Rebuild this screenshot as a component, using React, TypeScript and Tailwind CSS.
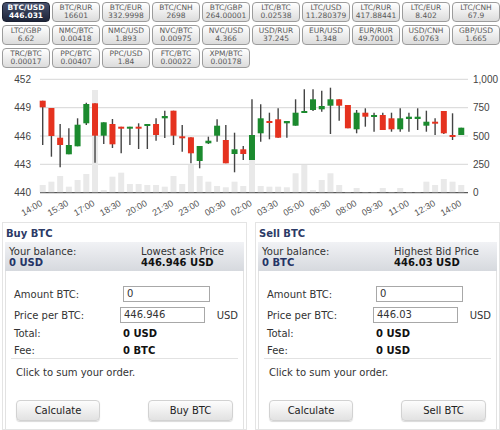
import React from 'react'

type Ticker = { pair: string; price: string }

const tickers: Ticker[] = [
  { pair: 'BTC/USD', price: '446.031' },
  { pair: 'BTC/RUR', price: '16601' },
  { pair: 'BTC/EUR', price: '332.9998' },
  { pair: 'BTC/CNH', price: '2698' },
  { pair: 'BTC/GBP', price: '264.00001' },
  { pair: 'LTC/BTC', price: '0.02538' },
  { pair: 'LTC/USD', price: '11.280379' },
  { pair: 'LTC/RUR', price: '417.88441' },
  { pair: 'LTC/EUR', price: '8.402' },
  { pair: 'LTC/CNH', price: '67.9' },
  { pair: 'LTC/GBP', price: '6.62' },
  { pair: 'NMC/BTC', price: '0.00418' },
  { pair: 'NMC/USD', price: '1.893' },
  { pair: 'NVC/BTC', price: '0.00975' },
  { pair: 'NVC/USD', price: '4.366' },
  { pair: 'USD/RUR', price: '37.245' },
  { pair: 'EUR/USD', price: '1.348' },
  { pair: 'EUR/RUR', price: '49.70001' },
  { pair: 'USD/CNH', price: '6.0763' },
  { pair: 'GBP/USD', price: '1.665' },
  { pair: 'TRC/BTC', price: '0.00017' },
  { pair: 'PPC/BTC', price: '0.00407' },
  { pair: 'PPC/USD', price: '1.84' },
  { pair: 'FTC/BTC', price: '0.00022' },
  { pair: 'XPM/BTC', price: '0.00178' },
]

// [wickTop, wickBottom, bodyTop, bodyBottom, rising, volumeTop] in page pixels
const candles: [number, number, number, number, number, number][] = [
  [100.7, 145, 100.7, 107.3, 0, 185],
  [108, 156.7, 108, 136, 0, 181.7],
  [124, 167.3, 137.7, 145, 0, 176],
  [128.3, 154.3, 145, 154.3, 1, 186.7],
  [118.3, 146.3, 124.7, 146.3, 1, 180],
  [102.7, 125, 104, 123.3, 1, 174],
  [103.3, 162.7, 103.3, 135.7, 0, 90],
  [122.3, 144, 122.3, 135.7, 1, 190],
  [119, 148, 124, 144.3, 0, 176.7],
  [126.7, 153.3, 126.7, 128.7, 0, 172.7],
  [126.7, 145, 126.7, 128.7, 1, 184],
  [123.3, 149, 126.7, 128.7, 0, 184],
  [124, 149, 124, 125.7, 1, 185],
  [118.3, 140.7, 124, 135, 0, 185],
  [110.7, 138, 116, 118.3, 1, 186.7],
  [110.7, 145, 110.7, 135.7, 0, 176],
  [125, 151.7, 136.3, 138.3, 0, 184],
  [137.3, 163.3, 137.3, 153.3, 0, 165],
  [146, 168.3, 146, 161, 1, 176],
  [136.7, 144, 140.7, 143.3, 1, 181.7],
  [119.3, 141.7, 125.7, 135.7, 1, 186],
  [125, 163.3, 140, 163.3, 0, 187.3],
  [132.7, 172.3, 149.3, 154, 1, 181.7],
  [146, 160, 149.3, 154, 0, 186],
  [99.3, 160, 135, 160, 1, 160],
  [104.3, 141.7, 118.3, 133.3, 1, 186],
  [112.7, 139.3, 121, 122.7, 0, 186.7],
  [108.3, 137.7, 119.3, 137.7, 0, 186.7],
  [121, 137.7, 121, 123.3, 1, 187.3],
  [99.3, 125.7, 112.7, 125.7, 1, 173.3],
  [89.3, 112.7, 111, 112.7, 1, 165],
  [89.3, 111, 99.3, 110, 1, 190],
  [90.7, 111.7, 106, 109.3, 1, 180],
  [87.7, 134, 99.3, 105.7, 1, 173.3],
  [99.3, 120.7, 99.3, 105.7, 0, 185],
  [105, 128.3, 105, 128.3, 0, 192],
  [110, 133.3, 112.7, 129.3, 1, 188],
  [108.3, 126.7, 112.7, 116.7, 0, 192],
  [112.7, 131.7, 115, 116.7, 1, 192],
  [112.7, 130, 115, 130, 0, 188],
  [112.7, 131.7, 118.3, 129.3, 0, 192],
  [108.3, 131.7, 118.3, 129.3, 1, 188],
  [112.7, 131.7, 116.7, 119, 1, 192],
  [108.3, 130, 116.7, 119, 1, 192],
  [110.7, 131.7, 121.7, 125.7, 1, 181.7],
  [118.3, 135, 121.7, 123.3, 0, 185],
  [111, 134, 111, 133.3, 0, 179],
  [113.3, 140, 135, 136.7, 0, 181.7],
  [127.7, 135, 127.7, 135, 1, 185],
]

const times = [
  '14:00', '15:30', '17:00', '18:30', '20:00', '21:30', '23:00', '00:30', '02:00',
  '03:30', '05:00', '06:30', '08:00', '09:30', '11:00', '12:30', '14:00',
]

const gridRows = [
  { y: 79.3, left: '452', right: '1,000' },
  { y: 107.7, left: '449', right: '750' },
  { y: 136, left: '446', right: '500' },
  { y: 164.3, left: '443', right: '250' },
  { y: 192.7, left: '440', right: '0' },
]

function TickerButton({ t, active }: { t: Ticker; active?: boolean }) {
  return (
    <div
      className={`h-[20px] rounded-[4px] border flex flex-col items-center justify-center text-[7.5px] leading-[8.5px] ${
        active
          ? 'bg-linear-to-b from-[#48526e] to-[#1e2539] border-[#1b2133] text-white font-bold'
          : 'bg-linear-to-b from-white to-[#dcdcdc] border-[#9c9c9c] text-[#5a5a5a]'
      }`}
    >
      <span>{t.pair}</span>
      <span>{t.price}</span>
    </div>
  )
}

function Chart() {
  const step = 8.72
  return (
    <svg width="500" height="150" viewBox="0 70 500 150" className="block mt-[2px]">
      {gridRows.map((g) => (
        <g key={g.left}>
          <line x1="40" x2="468" y1={g.y} y2={g.y} stroke={g.left === '440' ? '#333' : '#d6d6d6'} strokeWidth="1" />
          <text x="31" y={g.y + 3.5} textAnchor="end" fontSize="10" fill="#444" fontFamily="Liberation Sans, Arial, sans-serif">
            {g.left}
          </text>
          <text x="473" y={g.y + 3.5} fontSize="10" fill="#444" fontFamily="Liberation Sans, Arial, sans-serif">
            {g.right}
          </text>
        </g>
      ))}
      {candles.map((c, i) => {
        const x = 42.7 + i * step
        return <rect key={'v' + i} x={x - 3} y={c[5]} width="6" height={192.2 - c[5]} fill="#e9e9e9" />
      })}
      {candles.map((c, i) => {
        const x = 42.7 + i * step
        const color = c[4] ? '#1b8a2e' : '#e5321f'
        const h = Math.max(c[3] - c[2], 2)
        return (
          <g key={'c' + i}>
            <line x1={x} x2={x} y1={c[0]} y2={c[1]} stroke="#444" strokeWidth="1.4" />
            <rect x={x - 3} y={c[2]} width="6" height={h} fill={color} />
          </g>
        )
      })}
      {times.map((t, i) => {
        const x = 43 + i * 26.2
        return (
          <text
            key={i}
            x={x}
            y="205"
            textAnchor="end"
            fontSize="9"
            fill="#555"
            fontFamily="Liberation Sans, Arial, sans-serif"
            transform={`rotate(-30 ${x} 205)`}
          >
            {t}
          </text>
        )
      })}
    </svg>
  )
}

function OrderPanel({
  title,
  balance,
  priceLabel,
  price,
  inputPrice,
  fee,
  action,
}: {
  title: string
  balance: string
  priceLabel: string
  price: string
  inputPrice: string
  fee: string
  action: string
}) {
  return (
    <div className="w-[245px] h-[208px] border border-[#e4e4e4] flex flex-col">
      <div className="h-[19px] pl-[3px] pt-[3px] text-[10px] font-bold text-[#2c3a66]">{title}</div>
      <div className="mx-[2px] h-[29px] bg-linear-to-b from-[#f1f2f5] to-[#d6d9de] flex items-center text-[10px] leading-[11px]">
        <div className="w-[136px] pl-[4px]">
          <div className="text-[#333]">Your balance:</div>
          <div className="font-bold text-[#253466]">{balance}</div>
        </div>
        <div>
          <div className="text-[#333]">{priceLabel}</div>
          <div className="font-bold text-[#111]">{price}</div>
        </div>
      </div>
      <div className="mx-[2px] flex-1 border-x border-[#e2e2e2] px-[5px] pt-[15px] text-[10px] text-[#333]">
        <div className="flex items-center h-[16px]">
          <span className="w-[112px] pl-[3px]">Amount BTC:</span>
          <div className="w-[87px] h-[16px] border border-[#a8a8a8] bg-white pl-[3px] leading-[14px]">0</div>
        </div>
        <div className="flex items-center h-[16px] mt-[5px]">
          <span className="w-[112px] pl-[3px]">Price per BTC:</span>
          <div className="w-[87px] h-[16px] border border-[#a8a8a8] bg-white pl-[3px] leading-[14px]">{inputPrice}</div>
          <span className="ml-[12px]">USD</span>
        </div>
        <div className="flex items-center h-[17px] mt-[2px]">
          <span className="w-[112px] pl-[3px]">Total:</span>
          <span className="font-bold text-[#111]">0 USD</span>
        </div>
        <div className="flex items-center h-[17px] border-b border-[#e2e2e2]">
          <span className="w-[112px] pl-[3px]">Fee:</span>
          <span className="font-bold text-[#111]">{fee}</span>
        </div>
        <div className="pl-[5px] pt-[6px]">Click to sum your order.</div>
        <div className="flex justify-between px-[5px] mt-[20px]">
          <button className="w-[84px] h-[21px] rounded-[4px] border border-[#d2d2d2] bg-linear-to-b from-[#fdfdfd] to-[#e2e2e2] shadow-[0_1px_1px_rgba(0,0,0,0.15)] text-[10px] text-[#222]">
            Calculate
          </button>
          <button className="w-[85px] h-[21px] rounded-[4px] border border-[#d2d2d2] bg-linear-to-b from-[#fdfdfd] to-[#e2e2e2] shadow-[0_1px_1px_rgba(0,0,0,0.15)] text-[10px] text-[#222]">
            {action}
          </button>
        </div>
      </div>
    </div>
  )
}

export default function App() {
  return (
    <div className="w-[500px] h-[430px] bg-white overflow-hidden font-['DejaVu_Sans',sans-serif]">
      <div className="grid grid-cols-[repeat(10,48px)] gap-x-[2px] gap-y-[3px] pl-[2px] pt-[2px]">
        {tickers.map((t, i) => (
          <TickerButton key={t.pair} t={t} active={i === 0} />
        ))}
      </div>
      <Chart />
      <div className="flex gap-[8px] pl-[2px] pt-[2px]">
        <OrderPanel
          title="Buy BTC"
          balance="0 USD"
          priceLabel="Lowest ask Price"
          price="446.946 USD"
          inputPrice="446.946"
          fee="0 BTC"
          action="Buy BTC"
        />
        <OrderPanel
          title="Sell BTC"
          balance="0 BTC"
          priceLabel="Highest Bid Price"
          price="446.03 USD"
          inputPrice="446.03"
          fee="0 USD"
          action="Sell BTC"
        />
      </div>
    </div>
  )
}
